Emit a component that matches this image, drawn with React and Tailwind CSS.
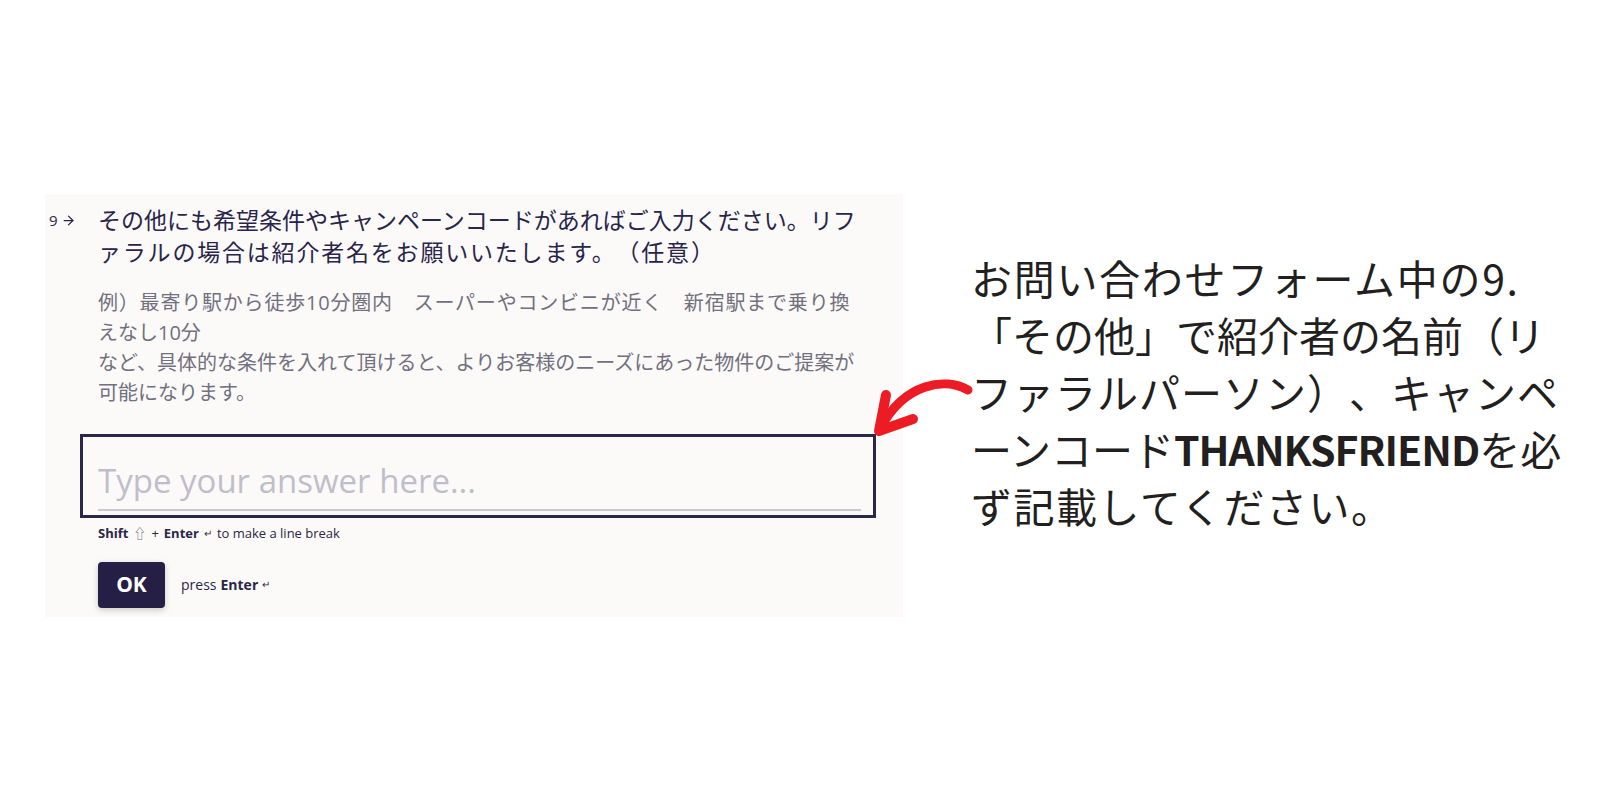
import React from "react";
import { ArrowRight } from "lucide-react";

const uiFont = { fontFamily: '"Open Sans","Noto Sans CJK JP",sans-serif' };
const jpFont = { fontFamily: '"Noto Sans CJK JP",sans-serif' };

const Arrow = () => (
  <svg
    className="absolute left-0 top-0 pointer-events-none"
    width="1600"
    height="800"
    viewBox="0 0 1600 800"
  >
    <path
      d="M968 390 C 945 377, 905 383, 881 427"
      fill="none"
      stroke="#ed1c24"
      strokeWidth="9"
      strokeLinecap="round"
    />
    <path
      d="M886 395 L 879 431 L 913 419"
      fill="none"
      stroke="#ed1c24"
      strokeWidth="10"
      strokeLinecap="round"
      strokeLinejoin="round"
    />
  </svg>
);

const App = () => {
  return (
    <div className="relative w-[1600px] h-[800px] bg-white overflow-hidden [text-spacing-trim:space-all]">
      <div className="flex items-start pt-[194px] pl-[45px]">
        {/* form question panel */}
        <div
          className="w-[858px] h-[423px] bg-[#fbfaf9] flex pt-[10px]"
          style={uiFont}
        >
          <div className="w-[53px] h-[32px] flex items-center pl-[4px] gap-[3px] text-[#2a2648]">
            <span className="text-[15px]">9</span>
            <ArrowRight size={15} strokeWidth={2} />
          </div>
          <div className="flex flex-col">
            <h2 className="text-[23px] leading-[32px] text-[#29254a]">
              その他にも希望条件やキャンペーンコードがあればご入力ください。リフ
              <br />
              <span className="tracking-[1.8px]">
                ァラルの場合は紹介者名をお願いいたします。（任意）
              </span>
            </h2>
            <p className="mt-[20px] text-[20px] leading-[30px] text-[#72707f]">
              <span className="tracking-[0.8px]">
                例）最寄り駅から徒歩10分圏内　スーパーやコンビニが近く　新宿駅まで乗り換
              </span>
              <br />
              えなし10分
              <br />
              など、具体的な条件を入れて頂けると、よりお客様のニーズにあった物件のご提案が
              <br />
              可能になります。
            </p>

            {/* answer box */}
            <div className="mt-[26px] -ml-[18px] w-[796px] h-[84px] border-[3px] border-[#2b2747] pl-[15px] pr-[12px] pt-[16px]">
              <div className="border-b-2 border-[#cac8d0] h-[58px] flex items-center">
                <span className="text-[33px] text-[#c0bec9]">
                  Type your answer here...
                </span>
              </div>
            </div>
            <div className="mt-[6px] text-[13px] text-[#2a2648] flex items-center gap-[5px]">
              <span className="font-bold">Shift</span>
              <span className="text-[#6e6b7c]">⇧</span>
              <span>+</span>
              <span className="font-bold">Enter</span>
              <span className="text-[10px]">↵</span>
              <span>to make a line break</span>
            </div>
            <div className="mt-[18px] flex items-center gap-[16px]">
              <button className="w-[67px] h-[46px] rounded-[4px] bg-[#251f45] text-white text-[21px] font-bold shadow-[0_2px_6px_rgba(0,0,0,0.2)]">
                OK
              </button>
              <span className="text-[14px] text-[#2a2648] flex items-center gap-[4px]">
                press <span className="font-bold">Enter</span>
                <span className="text-[10px]">↵</span>
              </span>
            </div>
          </div>
        </div>

        {/* annotation */}
        <div
          className="ml-[68px] mt-[55px] text-[41px] leading-[57px] text-[#231f20]"
          style={jpFont}
        >
          <span className="tracking-[1.7px]">お問い合わせフォーム中の9.</span>
          <br />
          「その他」で紹介者の名前（リ
          <br />
          <span className="tracking-[1px]">ファラルパーソン）、キャンペ</span>
          <br />
          ーンコード
          <span className="font-bold tracking-[-1px]">THANKSFRIEND</span>
          を必
          <br />
          <span className="tracking-[1.5px]">ず記載してください。</span>
        </div>
      </div>
      <Arrow />
    </div>
  );
};

export default App;
